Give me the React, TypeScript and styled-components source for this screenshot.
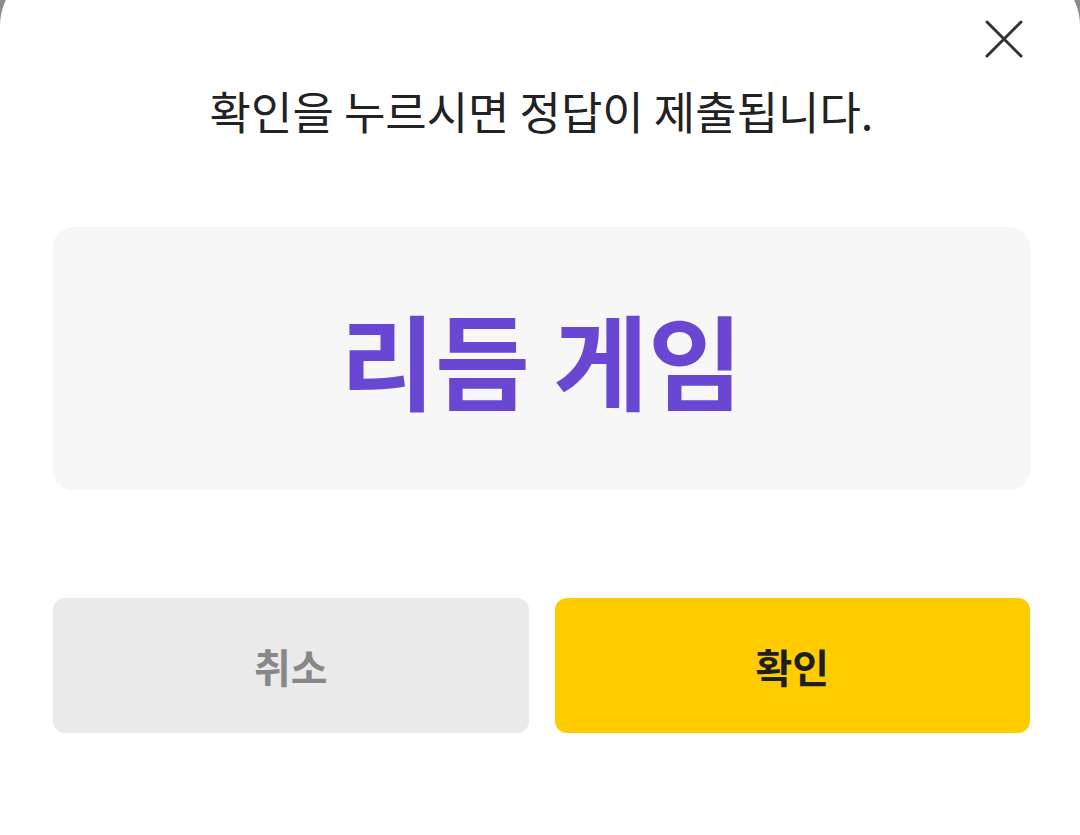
import React from "react";
import styled, { createGlobalStyle } from "styled-components";

const Global = createGlobalStyle`
  html, body {
    margin: 0;
    padding: 0;
    background: #8c8c8c;
    overflow: hidden;
  }
  body {
    font-family: "Noto Sans CJK KR", "Noto Sans", sans-serif;
  }
`;

const Sheet = styled.div`
  box-sizing: border-box;
  width: 1080px;
  height: 869px;
  margin-top: -34px;
  padding: 34px 50px 0 53px;
  background: #ffffff;
  border-radius: 60px 60px 0 0;
  display: flex;
  flex-direction: column;
`;

const Header = styled.div`
  display: flex;
  justify-content: flex-end;
  padding-top: 20px;
  padding-right: 7px;
  height: 36px;
`;

const CloseButton = styled.button`
  width: 38px;
  height: 38px;
  padding: 0;
  border: none;
  background: transparent;
  display: flex;
  align-items: center;
  justify-content: center;
  cursor: pointer;
`;

const Title = styled.h1`
  margin: 30px 0 0 0;
  font-size: 45px;
  font-weight: 400;
  line-height: 50px;
  color: #222222;
  text-align: center;
`;

const AnswerCard = styled.div`
  margin-top: 91px;
  height: 263px;
  background: #f7f7f7;
  border-radius: 20px;
  display: flex;
  align-items: center;
  justify-content: center;
`;

const Answer = styled.span`
  font-size: 103px;
  font-weight: 700;
  color: #6a47d3;
  line-height: 1;
`;

const ButtonRow = styled.div`
  margin-top: 108px;
  display: grid;
  grid-template-columns: 1fr 1fr;
  gap: 26px;
`;

const ActionButton = styled.button<{ $primary?: boolean }>`
  height: 135px;
  border: none;
  border-radius: 12px;
  background: ${(p) => (p.$primary ? "#ffcc00" : "#eaeaea")};
  color: ${(p) => (p.$primary ? "#1e1e1e" : "#888888")};
  font-family: "Noto Sans CJK KR", "Noto Sans", sans-serif;
  font-size: 40px;
  font-weight: 700;
  cursor: pointer;
`;

export default function App() {
  return (
    <>
      <Global />
      <Sheet>
        <Header>
          <CloseButton aria-label="닫기">
            <svg width="38" height="38" viewBox="0 0 38 38">
              <path
                d="M2 2 L36 36 M36 2 L2 36"
                stroke="#333333"
                strokeWidth="3"
                strokeLinecap="round"
              />
            </svg>
          </CloseButton>
        </Header>
        <Title>확인을 누르시면 정답이 제출됩니다.</Title>
        <AnswerCard>
          <Answer>리듬 게임</Answer>
        </AnswerCard>
        <ButtonRow>
          <ActionButton>취소</ActionButton>
          <ActionButton $primary>확인</ActionButton>
        </ButtonRow>
      </Sheet>
    </>
  );
}
